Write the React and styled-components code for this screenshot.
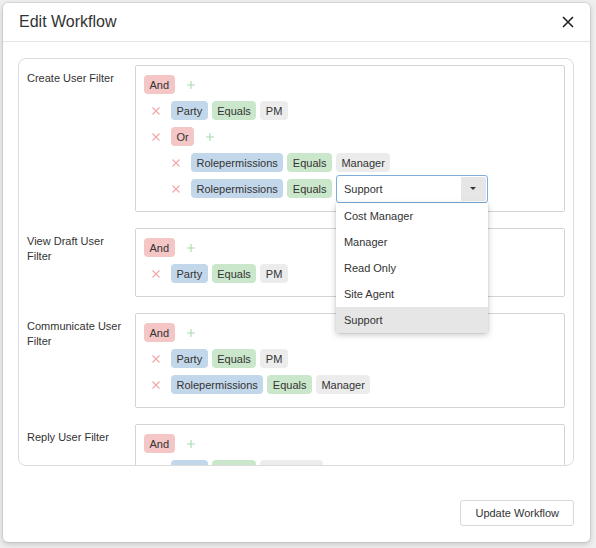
import React from 'react';
import styled, { createGlobalStyle } from 'styled-components';

const Global = createGlobalStyle`
  html, body { margin: 0; padding: 0; background: #efefef; }
  body { font-family: "Liberation Sans", Arial, Helvetica, sans-serif; color: #333; }
  * { box-sizing: border-box; }
`;

const Page = styled.div`
  padding: 3px 6px 6px 3px;
`;

const Modal = styled.div`
  width: 587px;
  height: 539px;
  background: #fff;
  border-radius: 5px;
  box-shadow: 0 0 0 1px rgba(0, 0, 0, 0.07), 0 2px 6px rgba(0, 0, 0, 0.18);
  display: flex;
  flex-direction: column;
`;

const Header = styled.div`
  height: 39px;
  flex: none;
  border-bottom: 1px solid #e5e5e5;
  display: flex;
  align-items: center;
  justify-content: space-between;
  padding: 0 16px;
`;

const Title = styled.h4`
  margin: 0;
  font-size: 16px;
  font-weight: normal;
  color: #333;
`;

const CloseButton = styled.button`
  border: 0;
  background: none;
  padding: 0;
  width: 12px;
  height: 12px;
  display: flex;
  color: #222;
`;

const Body = styled.div`
  padding: 16px 16px 0 15px;
  flex: none;
`;

const ScrollBox = styled.div`
  height: 408px;
  border: 1px solid #dcdcdc;
  border-radius: 8px;
  overflow: hidden;
  padding: 6px 8px 0 8px;
  display: flex;
  flex-direction: column;
  gap: 16px;
`;

const FilterRow = styled.div`
  display: flex;
  align-items: flex-start;
  flex: none;
`;

const Label = styled.div`
  width: 108px;
  flex: none;
  padding: 6px 8px 0 0;
  font-size: 11px;
  line-height: 15px;
  color: #333;
`;

const FilterBox = styled.div`
  flex: 1;
  border: 1px solid #d4d4d4;
  border-radius: 2px;
  padding: 9px 8px 13px;
  display: flex;
  flex-direction: column;
  gap: 7px;
`;

const Line = styled.div`
  display: flex;
  align-items: center;
  height: 19px;
  gap: 4px;
  padding-left: ${(p) => p.$indent}px;
`;

const IconCell = styled.span`
  width: 8px;
  height: 8px;
  display: inline-flex;
  margin-right: ${(p) => p.$mr || 0}px;
  margin-left: ${(p) => p.$ml || 0}px;
  flex: none;
`;

const tagColors = {
  op: '#f4c6c6',
  field: '#c3d7ea',
  cmp: '#cbe7cb',
  value: '#ececec',
};

const Tag = styled.span`
  display: inline-flex;
  align-items: center;
  height: 19px;
  padding: 0 5.5px;
  border-radius: 4px;
  font-size: 11px;
  color: #333;
  background: ${(p) => tagColors[p.$kind]};
  white-space: nowrap;
`;

const SelectWrap = styled.div`
  position: relative;
  width: 152px;
  height: 28px;
  border: 1px solid #7eaedb;
  border-radius: 3px;
  display: flex;
  align-items: center;
  background: #fff;
  flex: none;
`;

const SelectValue = styled.span`
  flex: 1;
  padding-left: 7px;
  font-size: 11px;
  color: #333;
`;

const SelectButton = styled.span`
  width: 25px;
  height: 24px;
  margin-right: 1px;
  background: #e6e6e6;
  border-radius: 0 2px 2px 0;
  display: flex;
  align-items: center;
  justify-content: center;
`;

const Caret = styled.span`
  width: 0;
  height: 0;
  border-left: 3px solid transparent;
  border-right: 3px solid transparent;
  border-top: 3px solid #333;
`;

const Menu = styled.ul`
  position: absolute;
  top: 100%;
  left: -1px;
  width: 152px;
  margin: 1px 0 0;
  padding: 0;
  list-style: none;
  background: #fff;
  border-radius: 0 0 3px 3px;
  box-shadow: 0 2px 6px rgba(0, 0, 0, 0.22), 0 0 0 1px rgba(0, 0, 0, 0.04);
  z-index: 5;
  overflow: hidden;
`;

const MenuItem = styled.li`
  height: 26px;
  display: flex;
  align-items: center;
  padding-left: 8px;
  font-size: 11px;
  color: #333;
  background: ${(p) => (p.$active ? '#e6e6e6' : '#fff')};
`;

const Footer = styled.div`
  display: flex;
  justify-content: flex-end;
  padding: 34px 16px 16px;
  flex: none;
`;

const Button = styled.button`
  height: 26px;
  padding: 0 14px;
  border: 1px solid #d9d9d9;
  border-radius: 3px;
  background: #fff;
  font-family: "Liberation Sans", Arial, Helvetica, sans-serif;
  font-size: 11px;
  color: #333;
`;

const RemoveIcon = () => (
  <svg width="8" height="8" viewBox="0 0 8 8">
    <path d="M0.5 0.5L7.5 7.5M7.5 0.5L0.5 7.5" stroke="#f2a5a5" strokeWidth="1.1" />
  </svg>
);

const AddIcon = () => (
  <svg width="8" height="8" viewBox="0 0 8 8">
    <path d="M4 0V8M0 4H8" stroke="#a9dca9" strokeWidth="1.1" />
  </svg>
);

const CloseIcon = () => (
  <svg width="12" height="12" viewBox="0 0 12 12">
    <path d="M1 1L11 11M11 1L1 11" stroke="#222" strokeWidth="1.6" />
  </svg>
);

const options = ['Cost Manager', 'Manager', 'Read Only', 'Site Agent', 'Support'];

const Select = ({ value, open }) => (
  <SelectWrap>
    <SelectValue>{value}</SelectValue>
    <SelectButton>
      <Caret />
    </SelectButton>
    {open && (
      <Menu>
        {options.map((o) => (
          <MenuItem key={o} $active={o === value}>
            {o}
          </MenuItem>
        ))}
      </Menu>
    )}
  </SelectWrap>
);

const renderNode = (node, depth, key) => {
  const indent = depth === 0 ? 0 : 8 + (depth - 1) * 20;
  if (node.op) {
    return (
      <React.Fragment key={key}>
        <Line $indent={indent}>
          {depth > 0 && (
            <IconCell $mr={7}>
              <RemoveIcon />
            </IconCell>
          )}
          <Tag $kind="op">{node.op}</Tag>
          <IconCell $ml={8}>
            <AddIcon />
          </IconCell>
        </Line>
        {node.children.map((c, i) => renderNode(c, depth + 1, `${key}-${i}`))}
      </React.Fragment>
    );
  }
  return (
    <Line key={key} $indent={indent}>
      <IconCell $mr={7}>
        <RemoveIcon />
      </IconCell>
      <Tag $kind="field">{node.field}</Tag>
      <Tag $kind="cmp">{node.cmp}</Tag>
      {node.select ? (
        <Select value={node.value} open={node.open} />
      ) : (
        <Tag $kind="value">{node.value}</Tag>
      )}
    </Line>
  );
};

const filters = [
  {
    label: 'Create User Filter',
    tree: {
      op: 'And',
      children: [
        { field: 'Party', cmp: 'Equals', value: 'PM' },
        {
          op: 'Or',
          children: [
            { field: 'Rolepermissions', cmp: 'Equals', value: 'Manager' },
            { field: 'Rolepermissions', cmp: 'Equals', value: 'Support', select: true, open: true },
          ],
        },
      ],
    },
  },
  {
    label: 'View Draft User Filter',
    tree: { op: 'And', children: [{ field: 'Party', cmp: 'Equals', value: 'PM' }] },
  },
  {
    label: 'Communicate User Filter',
    tree: {
      op: 'And',
      children: [
        { field: 'Party', cmp: 'Equals', value: 'PM' },
        { field: 'Rolepermissions', cmp: 'Equals', value: 'Manager' },
      ],
    },
  },
  {
    label: 'Reply User Filter',
    tree: {
      op: 'And',
      children: [
        { field: 'Party', cmp: 'Equals', value: 'Contractor' },
        { field: 'Rolepermissions', cmp: 'Equals', value: 'Manager' },
      ],
    },
  },
];

export default function App() {
  return (
    <Page>
      <Global />
      <Modal>
        <Header>
          <Title>Edit Workflow</Title>
          <CloseButton aria-label="Close">
            <CloseIcon />
          </CloseButton>
        </Header>
        <Body>
          <ScrollBox>
            {filters.map((f) => (
              <FilterRow key={f.label}>
                <Label>{f.label}</Label>
                <FilterBox>{renderNode(f.tree, 0, f.label)}</FilterBox>
              </FilterRow>
            ))}
          </ScrollBox>
        </Body>
        <Footer>
          <Button>Update Workflow</Button>
        </Footer>
      </Modal>
    </Page>
  );
}
